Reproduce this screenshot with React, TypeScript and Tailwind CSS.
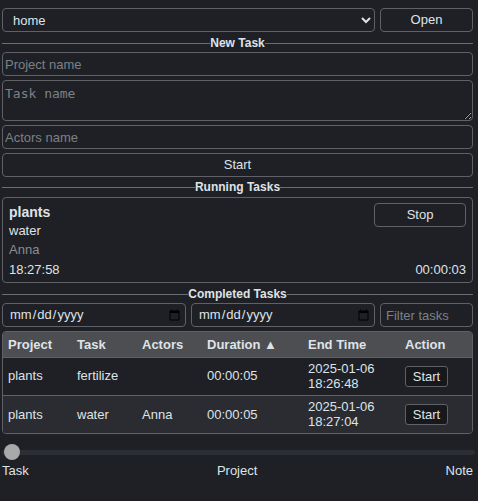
import React from "react";

const font = "font-['Liberation_Sans',Arial,sans-serif]";
const field =
  "h-[24px] rounded-[4px] border border-[#5f6166] bg-[#1e2025] px-[2px] text-[13px] text-[#dfe3e8] placeholder:text-[#7d8085] outline-none";
const btn =
  "h-[24px] rounded-[4px] border border-[#5f6166] bg-[#1e2025] text-[13px] text-[#dfe3e8]";

function Legend({ title }: { title: string }) {
  return (
    <div className="flex items-center h-[14px]">
      <div className="flex-1 h-px bg-[#6b6d72]" />
      <span className="text-[12px] font-bold text-[#dfe3e8] leading-none">{title}</span>
      <div className="flex-1 h-px bg-[#6b6d72]" />
    </div>
  );
}

const rows = [
  { project: "plants", task: "fertilize", actors: "", duration: "00:00:05", end: ["2025-01-06", "18:26:48"] },
  { project: "plants", task: "water", actors: "Anna", duration: "00:00:05", end: ["2025-01-06", "18:27:04"] },
];

export default function App() {
  return (
    <div className={`${font} w-[478px] h-[501px] bg-[#1e2025] text-[#dfe3e8] pl-[2px] pr-[5px] pt-[8px]`}>
      <div className="flex gap-[5px]">
        <select className={`${field} flex-1 [color-scheme:dark] pl-[6px]`} defaultValue="home">
          <option value="home">home</option>
        </select>
        <button className={`${btn} w-[93px]`}>Open</button>
      </div>

      <div className="mt-[4px]">
        <Legend title="New Task" />
      </div>
      <div className="mt-[2px] flex flex-col gap-[4px]">
        <input className={field} placeholder="Project name" />
        <textarea
          className={`${field} h-[41px] font-['DejaVu_Sans_Mono',monospace] text-[12px] py-[3px]`}
          placeholder="Task name"
        />
        <input className={field} placeholder="Actors name" />
        <button className={btn}>Start</button>
      </div>

      <div className="mt-[3px]">
        <Legend title="Running Tasks" />
      </div>
      <div className="mt-[3px] h-[86px] rounded-[4px] border border-[#5f6166] px-[6px] pt-[5px] flex flex-col">
        <div className="flex justify-between items-start">
          <span className="text-[14px] font-bold leading-[16px] mt-[1px]">plants</span>
          <button className={`${btn} w-[92px] h-[24px]`}>Stop</button>
        </div>
        <div className="text-[13px] leading-[19px] -mt-[6px]">water</div>
        <div className="text-[13px] leading-[19px] text-[#8b8d91]">Anna</div>
        <div className="flex justify-between text-[13px] leading-[19px] mt-[1px]">
          <span>18:27:58</span>
          <span>00:00:03</span>
        </div>
      </div>

      <div className="mt-[4px]">
        <Legend title="Completed Tasks" />
      </div>
      <div className="mt-[2px] flex gap-[5px]">
        <input type="date" className={`${field} w-[184px] shrink-0 pl-[6px]`} />
        <input type="date" className={`${field} w-[184px] shrink-0 pl-[6px]`} />
        <input className={`${field} flex-1 min-w-0 pl-[5px]`} placeholder="Filter tasks" />
      </div>

      <div className="mt-[4px] rounded-[4px] border border-[#5f6166] overflow-hidden">
        <table className="w-full border-collapse text-[13px] text-left">
          <thead>
            <tr className="bg-[#4d4e51] h-[25px]">
              <th className="w-[69px] pl-[5px] font-bold">Project</th>
              <th className="w-[65px] pl-[5px] font-bold">Task</th>
              <th className="w-[65px] pl-[5px] font-bold">Actors</th>
              <th className="w-[101px] pl-[5px] font-bold">Duration ▲</th>
              <th className="w-[97px] pl-[5px] font-bold">End Time</th>
              <th className="pl-[5px] font-bold">Action</th>
            </tr>
          </thead>
          <tbody>
            {rows.map((r, i) => (
              <tr
                key={i}
                className={`h-[38px] border-t border-[#5f6166] ${i === 1 ? "bg-[#2a2c31]" : "bg-[#1e2025]"}`}
              >
                <td className="pl-[5px]">{r.project}</td>
                <td className="pl-[5px]">{r.task}</td>
                <td className="pl-[5px]">{r.actors}</td>
                <td className="pl-[5px]">{r.duration}</td>
                <td className="pl-[5px] leading-[15px]">
                  {r.end[0]}
                  <br />
                  {r.end[1]}
                </td>
                <td className="pl-[5px]">
                  <button className="h-[21px] w-[43px] rounded-[3px] border border-[#5f6166] bg-[#17181b] text-[13px]">
                    Start
                  </button>
                </td>
              </tr>
            ))}
          </tbody>
        </table>
      </div>

      <div className="relative mt-[10px] -mr-[2px] h-[16px] flex items-center">
        <div className="w-full h-[5px] rounded-full bg-[#2b2e35]" />
        <div className="absolute left-[2px] top-0 w-[16px] h-[16px] rounded-full bg-[#a9a9a9]" />
      </div>
      <div className="flex justify-between text-[13px] mt-[1px]">
        <span>Task</span>
        <span>Project</span>
        <span>Note</span>
      </div>
    </div>
  );
}
